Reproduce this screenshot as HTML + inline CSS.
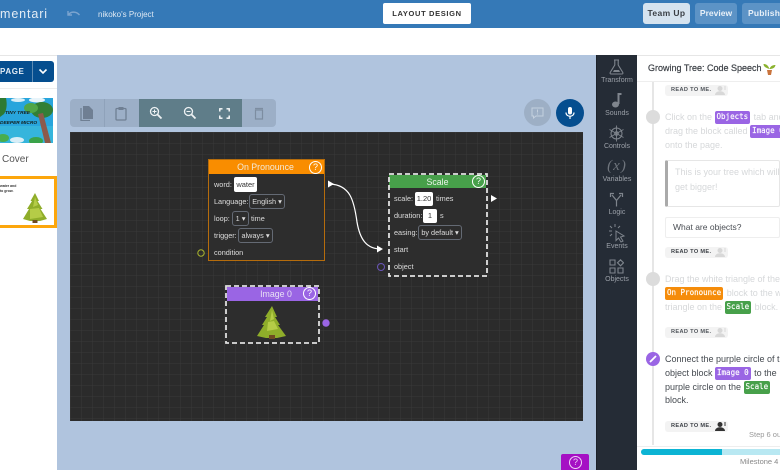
<!DOCTYPE html>
<html><head><meta charset="utf-8">
<style>
*{box-sizing:border-box}
html,body{margin:0;padding:0;width:780px;height:470px;overflow:hidden;background:#fff;font-family:"Liberation Sans",sans-serif}
.a{position:absolute}
.t{position:absolute;white-space:nowrap}
.btn{position:absolute;top:3px;height:21px;border-radius:3px;font:bold 8.5px/21px "Liberation Sans",sans-serif;letter-spacing:.4px;text-align:center;background:#5c93c6;color:#e8f0f8}
.lab{position:absolute;left:597px;width:40px;text-align:center;color:#9ba0a8;font-size:7px;line-height:8px;white-space:nowrap}
.bl{position:absolute;color:#ddd;font-size:7.3px;line-height:9px;white-space:nowrap}
.sel{position:absolute;border:1px solid #646a74;border-radius:3px;color:#ddd;font-size:7.3px;height:15px;line-height:13px;text-align:center;white-space:nowrap}
.inp{position:absolute;background:#fff;border-radius:2px;color:#333;font-size:7.5px;height:14px;line-height:14px;text-align:center}
.q{position:absolute;width:13px;height:13px;border:1.5px solid #fff;border-radius:50%;color:#fff;font-size:9px;line-height:10px;text-align:center}
.hd{position:absolute;font-size:8.8px;line-height:15px;text-align:center;white-space:nowrap}
.txt{position:absolute;font-size:9px;white-space:nowrap;color:#d6d8da}
.dark{color:#454a50}
.tag{display:inline-block;font:7.5px/12px "DejaVu Sans Mono","Liberation Mono",monospace;-webkit-text-stroke:.15px #fff;color:#fff;border-radius:2px;padding:0 2px;height:13px;margin:0 1px 0 0;vertical-align:1px}
.pu{background:#9a65e4}.or{background:#f58c0a}.gr{background:#47a04a}
.read{position:absolute;left:665px;width:63px;height:11px;background:#f3f3f3;border-radius:3px;color:#3c4046;font:bold 5.6px/11px "Liberation Sans",sans-serif;letter-spacing:.35px;padding-left:6px}
.dot{position:absolute;left:646px;width:14px;height:14px;border-radius:50%;background:#dcdcdc}
</style></head><body>

<!-- top bar -->
<div class="a" style="left:0;top:0;width:780px;height:28px;background:#3579b7"></div>
<div class="t" style="left:0;top:5px;color:#e3ecf5;font-size:12.500px;letter-spacing:.9px;line-height:18px">mentari</div>
<svg class="a" style="left:67px;top:9px" width="14" height="9" viewBox="0 0 14 9"><path d="M1 2v4h4M1.500 5.500C4 2.500 9 2 12.500 6" fill="none" stroke="#7ba4cf" stroke-width="1.400"/></svg>
<div class="t" style="left:98px;top:9px;color:#dfe9f3;font-size:8px;line-height:11px">nikoko's Project</div>
<div class="a" style="left:383px;top:3px;width:88px;height:21px;background:#fff;border-radius:2px;color:#333;font:bold 7.500px/21px 'Liberation Sans',sans-serif;letter-spacing:.65px;text-align:center">LAYOUT DESIGN</div>
<div class="btn" style="left:643px;width:47px;background:#d5e3ef;color:#3a3f45">Team Up</div>
<div class="btn" style="left:695px;width:42px;letter-spacing:0">Preview</div>
<div class="btn" style="left:742px;width:50px;text-align:left;padding-left:6px;letter-spacing:.2px">Publish</div>

<!-- white band line -->
<div class="a" style="left:0;top:55px;width:780px;height:1px;background:#e6e6e6"></div>

<!-- left panel -->
<div class="a" style="left:0;top:61px;width:54px;height:21px;background:#054e8f;border-radius:0 3px 3px 0"></div>
<div class="a" style="left:32px;top:61px;width:1px;height:21px;background:#5c8ab3"></div>
<div class="t" style="left:0;top:61px;color:#e4edf5;font:bold 8px/21px 'Liberation Sans',sans-serif;letter-spacing:.6px">PAGE</div>
<svg class="a" style="left:38px;top:68px" width="10" height="7" viewBox="0 0 10 7"><path d="M1.500 1.500L5 5l3.500-3.500" fill="none" stroke="#fff" stroke-width="1.600"/></svg>
<div class="a" style="left:0;top:88px;width:57px;height:1px;background:#eee"></div>

<svg class="a" style="left:0;top:98px" width="53" height="45" viewBox="0 0 53 45">
<rect width="53" height="45" fill="#28a5dc"/>
<rect y="28" width="53" height="17" fill="#35b5dc"/>
<ellipse cx="37" cy="2" rx="8" ry="2.500" fill="#e8f4fa"/>
<ellipse cx="18" cy="2" rx="7" ry="2" fill="#d8eef7"/>
<ellipse cx="36" cy="43" rx="7" ry="4" fill="#3aa34a"/>
<ellipse cx="17" cy="42" rx="7" ry="3" fill="#d8eef7"/>
<path d="M0 0h6q2 10-2 16l-4 3z" fill="#2e7a32"/>
<ellipse cx="42" cy="12" rx="11" ry="8" fill="#327f36"/>
<ellipse cx="31" cy="10" rx="7" ry="5" fill="#4fa648"/>
<path d="M38 16l5-1 8 30h-6z" fill="#8c5a4a"/>
<ellipse cx="3" cy="40" rx="6" ry="4" fill="#48ad4c"/>
<text x="5" y="16" font-size="4.800" font-weight="bold" font-style="italic" fill="#15201c" font-family="Liberation Sans">TINY TREE</text>
<text x="0" y="26" font-size="4.800" font-weight="bold" font-style="italic" fill="#15201c" font-family="Liberation Sans">DEEPER MICRO</text>
</svg>
<div class="t" style="left:2px;top:153px;color:#555;font-size:10px;line-height:13px">Cover</div>
<div class="a" style="left:0;top:176px;width:57px;height:52px;background:#fff;border:3px solid #fca60c;border-left:0"></div>
<div class="t" style="left:0;top:184px;color:#333;font-size:3.500px;line-height:5px;font-weight:bold">water and<br>to grow.</div>
<svg class="a" style="left:22px;top:192px" width="26" height="33" viewBox="0 0 26 33"><path d="M13 1l4 8-1.500 0 5 8-2 0 6.500 10-7 2H8l-7-2 6-10-2 0 5-8-1.500 0z" fill="#8fad2a"/><path d="M13 5l3 8-5 2zM8 17l9-1 4 9-13 2z" fill="#b5cc47"/><rect x="10.500" y="28" width="5" height="3" fill="#6e4a22"/></svg>

<!-- canvas bg -->
<div class="a" style="left:57px;top:55px;width:539px;height:415px;background:#b0c4de"></div>

<!-- toolbar -->
<div class="a" style="left:70px;top:99px;width:206px;height:28px;background:#9cafc7;border-radius:4px"></div>
<div class="a" style="left:104px;top:99px;width:1px;height:28px;background:#8fa2ba"></div>
<div class="a" style="left:139px;top:99px;width:103px;height:28px;background:#5f7d89"></div>
<svg class="a" style="left:80px;top:106px" width="14" height="15" viewBox="0 0 14 15"><path d="M3 0h6l4 4v9H3z" fill="#6f7f93"/><path d="M1 2v12.500h9" fill="none" stroke="#6f7f93" stroke-width="1.300"/></svg>
<svg class="a" style="left:115px;top:106px" width="12" height="15" viewBox="0 0 12 15"><rect x="1" y="2.500" width="10" height="11.500" rx="1" fill="none" stroke="#6f7f93" stroke-width="1.300"/><rect x="3.500" y="1" width="5" height="3" fill="#6f7f93"/></svg>
<svg class="a" style="left:149px;top:106px" width="14" height="14" viewBox="0 0 14 14"><circle cx="5.500" cy="5.500" r="4" fill="none" stroke="#eef2f4" stroke-width="1.300"/><path d="M8.500 8.500l4 4" stroke="#eef2f4" stroke-width="1.800"/><path d="M3.500 5.500h4M5.500 3.500v4" stroke="#eef2f4" stroke-width="1"/></svg>
<svg class="a" style="left:183px;top:106px" width="14" height="14" viewBox="0 0 14 14"><circle cx="5.500" cy="5.500" r="4" fill="none" stroke="#eef2f4" stroke-width="1.300"/><path d="M8.500 8.500l4 4" stroke="#eef2f4" stroke-width="1.800"/><path d="M3.500 5.500h4" stroke="#eef2f4" stroke-width="1"/></svg>
<svg class="a" style="left:219px;top:108px" width="11" height="11" viewBox="0 0 11 11"><path d="M.800 3.500V.800h2.700M7.500.800h2.700v2.700M10.200 7.500v2.700H7.500M3.500 10.200H.800V7.500" fill="none" stroke="#fff" stroke-width="1.400"/></svg>
<svg class="a" style="left:254px;top:107px" width="10" height="13" viewBox="0 0 10 13"><path d="M1 1.500h8M1.500 3h7v9h-7z" fill="none" stroke="#7d8da1" stroke-width="1.200"/></svg>

<!-- round buttons -->
<div class="a" style="left:524px;top:99px;width:27px;height:27px;border-radius:50%;background:#9dafc5"></div>
<svg class="a" style="left:531px;top:107px" width="13" height="12" viewBox="0 0 13 12"><path d="M1 1h11v8H5l-2.500 2V9H1z" fill="none" stroke="#c4d0de" stroke-width="1"/><path d="M6.500 2.500v3M6.500 6.500v1" stroke="#c4d0de" stroke-width="1"/></svg>
<div class="a" style="left:556px;top:99px;width:28px;height:28px;border-radius:50%;background:#054e8f"></div>
<svg class="a" style="left:564px;top:106px" width="12" height="14" viewBox="0 0 12 14"><rect x="4" y="1" width="4" height="7.500" rx="2" fill="#fff"/><path d="M2 6.500c0 5 8 5 8 0M6 10.500V13" fill="none" stroke="#fff" stroke-width="1.200"/></svg>

<!-- canvas -->
<svg class="a" style="left:70px;top:132px" width="513" height="289" viewBox="0 0 513 289">
<defs><pattern id="g" width="11" height="11" patternUnits="userSpaceOnUse"><path d="M11 0H0V11" fill="none" stroke="#3a3a3a" stroke-width="1"/></pattern></defs>
<rect width="513" height="289" fill="#2b2b2b"/><rect width="513" height="289" fill="url(#g)"/>
<path d="M260 52c20 1 24 16 27 38 3 18 10 27 24 27" fill="none" stroke="#fff" stroke-width="1.200"/>
<path d="M258 48.500v7l6-3.500zM307 113.500v7l6-3.500z" fill="#fff"/>
<path d="M421 63v7l6-3.500z" fill="#fff"/>
<circle cx="131" cy="121" r="3.200" fill="none" stroke="#a9b52c" stroke-width="1"/>
<circle cx="311" cy="135" r="3.500" fill="none" stroke="#6a55b8" stroke-width="1"/>
<circle cx="256" cy="191" r="3.700" fill="#9a65e4"/>
</svg>

<!-- On Pronounce -->
<div class="a" style="left:208px;top:159px;width:117px;height:102px;background:#2d2d2d;border:1px solid #b56c0c"></div>
<div class="hd" style="left:209px;top:160px;height:14px;color:#f4ead8;background:#f98d00;width:115px;padding-right:2px">On Pronounce</div>
<div class="q" style="left:309px;top:161px">?</div>
<div class="bl" style="left:214px;top:180px">word:</div>
<div class="inp" style="left:234px;top:177px;width:23px;height:15px;line-height:15px">water</div>
<div class="bl" style="left:214px;top:197px">Language:</div>
<div class="sel" style="left:249px;top:194px;width:36px">English ▾</div>
<div class="bl" style="left:214px;top:214px">loop:</div>
<div class="sel" style="left:232px;top:211px;width:17px">1 ▾</div>
<div class="bl" style="left:251px;top:214px">time</div>
<div class="bl" style="left:214px;top:231px">trigger:</div>
<div class="sel" style="left:238px;top:228px;width:35px">always ▾</div>
<div class="bl" style="left:214px;top:248px">condition</div>

<!-- Scale -->
<div class="a" style="left:388px;top:174px;width:99px;height:102px;background:#2d2d2d"></div>
<div class="hd" style="left:389px;top:175px;width:97px;height:13px;background:#47a04a;color:#e9f3e9">Scale</div>
<svg class="a" style="left:387px;top:172px" width="102" height="106" viewBox="0 0 102 106"><rect x="2" y="2" width="98" height="102" fill="none" stroke="#e2e2e2" stroke-width="1.800" stroke-dasharray="5 3"/></svg>
<div class="q" style="left:472px;top:175px">?</div>
<div class="bl" style="left:394px;top:194px">scale:</div>
<div class="inp" style="left:415px;top:192px;width:18px">1.20</div>
<div class="bl" style="left:436px;top:194px">times</div>
<div class="bl" style="left:394px;top:211px">duration:</div>
<div class="inp" style="left:423px;top:209px;width:14px">1</div>
<div class="bl" style="left:440px;top:211px">s</div>
<div class="bl" style="left:394px;top:228px">easing:</div>
<div class="sel" style="left:418px;top:225px;width:44px">by default ▾</div>
<div class="bl" style="left:394px;top:245px">start</div>
<div class="bl" style="left:394px;top:262px">object</div>

<!-- Image 0 -->
<div class="a" style="left:226px;top:286px;width:93px;height:57px;background:#2d2d2d"></div>
<div class="hd" style="left:227px;top:287px;width:91px;height:14px;background:#9a65e4;color:#e8e0f4;padding-left:7px">Image 0</div>
<svg class="a" style="left:224px;top:284px" width="97" height="61" viewBox="0 0 97 61"><rect x="2" y="2" width="93" height="57" fill="none" stroke="#dedede" stroke-width="1.800" stroke-dasharray="5 3"/></svg>
<div class="q" style="left:303px;top:287px">?</div>
<svg class="a" style="left:256px;top:305px" width="32" height="35" viewBox="0 0 32 35"><path d="M16 1l5 11h-2l5 8h-2l8 11-9 2H10l-9-2 7-11H6l5-8H9z" fill="#8fad2a"/><path d="M16 5l2 9-4 2zM12 17l6-1 4 8-11 2z" fill="#b5cc47"/><rect x="13" y="30" width="6" height="4" fill="#6e4a22"/></svg>

<!-- help -->
<div class="a" style="left:561px;top:454px;width:28px;height:16px;background:#a510c4;border-radius:2px 2px 0 0"></div>
<div class="q" style="left:569px;top:456px;border-color:#f0d4f6;color:#f0d4f6">?</div>

<!-- tool rail -->
<div class="a" style="left:597px;top:55px;width:40px;height:415px;background:#252c36"></div>
<div class="a" style="left:596px;top:55px;width:1px;height:415px;background:#1c2129"></div>
<svg class="a" style="left:609px;top:59px" width="15" height="16" viewBox="0 0 15 16"><path d="M5 1h5M5.800 1v5L1.200 13.500q-.5 1.500 1 1.500h10.600q1.500 0 1-1.500L9.200 6V1" fill="none" stroke="#7f858d" stroke-width="1.100"/><path d="M5 11h5l1 2H4z" fill="#7f858d"/></svg>
<div class="lab" style="top:77px">Transform</div>
<svg class="a" style="left:611px;top:92px" width="12" height="16" viewBox="0 0 12 16"><ellipse cx="4.500" cy="12.500" rx="3.500" ry="3" fill="#7f858d"/><rect x="6.500" y="1" width="2" height="11" fill="#7f858d"/><rect x="6.500" y="1" width="4" height="2" fill="#7f858d"/></svg>
<div class="lab" style="top:110px">Sounds</div>
<svg class="a" style="left:608px;top:125px" width="17" height="17" viewBox="0 0 17 17"><circle cx="8.500" cy="8.500" r="5.500" fill="none" stroke="#7f858d" stroke-width="1"/><circle cx="8.500" cy="8.500" r="1.800" fill="none" stroke="#7f858d"/><path d="M8.500 .5v16M1.500 4.500l14 8M15.500 4.500l-14 8" fill="none" stroke="#7f858d" stroke-width=".9"/></svg>
<div class="lab" style="top:143px">Controls</div>
<div class="t" style="left:597px;width:40px;top:158px;text-align:center;color:#6f757d;font:italic 15px/17px 'Liberation Serif',serif;letter-spacing:1px">(x)</div>
<div class="lab" style="top:176px">Variables</div>
<svg class="a" style="left:609px;top:192px" width="15" height="15" viewBox="0 0 15 15"><path d="M7.500 14.500V8.500L3 3M7.500 8.500L12 3M1.500 5V1.500H5M13.500 5V1.500H10" fill="none" stroke="#7f858d" stroke-width="1.200"/></svg>
<div class="lab" style="top:209px">Logic</div>
<svg class="a" style="left:608px;top:223px" width="18" height="20" viewBox="0 0 18 20"><path d="M8 8l8 5-3.500 1 2.500 4-2 1-2.500-4-2.500 2.500z" fill="none" stroke="#7f858d"/><path d="M7 1v3M2 3l2 2M1 8h3M2 13l2-2M12 3l-2 2" stroke="#7f858d"/></svg>
<div class="lab" style="top:243px">Events</div>
<svg class="a" style="left:609px;top:259px" width="15" height="15" viewBox="0 0 15 15"><path d="M1 1h5v5H1zM1 9h5v5H1zM9 9h5v5H9zM11.500 .8l3 3-3 3-3-3z" fill="none" stroke="#7f858d" stroke-width="1.100"/></svg>
<div class="lab" style="top:276px">Objects</div>

<!-- right panel -->
<div class="t" style="left:648px;top:62px;color:#3c4046;font-size:9px;line-height:13px;-webkit-text-stroke:.2px #3c4046">Growing Tree: Code Speech</div>
<svg class="a" style="left:763px;top:62px" width="13" height="13" viewBox="0 0 13 13"><path d="M6.500 7C5 3 3 2 .500 2c0 3 3 4 6 5zM6.500 7c1-3 3-4 6-4-.500 3-3 4-6 4z" fill="#8bb22e"/><path d="M4 8h5l-1 5H5z" fill="#c9743d"/></svg>
<div class="a" style="left:637px;top:81px;width:143px;height:1px;background:#eee"></div>
<div class="a" style="left:652px;top:82px;width:2px;height:363px;background:#e6e6e6"></div>

<div class="read" style="top:85px;color:#50555b">READ TO ME.</div>
<svg class="a" style="left:715px;top:85px" width="12" height="11" viewBox="0 0 12 11"><circle cx="5" cy="3.500" r="2.500" fill="#d8d8d8"/><path d="M0 10c0-5 10-5 10 0z" fill="#d8d8d8"/><path d="M10 1v4" stroke="#d8d8d8"/></svg>
<div class="dot" style="top:110px"></div>
<div class="txt" style="left:665px;top:110px;line-height:14px">Click on the <span class="tag pu">Objects</span> tab and</div>
<div class="txt" style="left:665px;top:124px;line-height:14px">drag the block called <span class="tag pu">Image 0</span></div>
<div class="txt" style="left:665px;top:138px;line-height:14px">onto the page.</div>

<div class="a" style="left:665px;top:160px;width:115px;height:47px;border:1px solid #e6e6e6;border-left:3px solid #aaa;border-radius:2px"></div>
<div class="txt" style="left:675px;top:165px;line-height:15px">This is your tree which will<br>get bigger!</div>
<div class="a" style="left:665px;top:217px;width:115px;height:21px;border:1px solid #eee;border-radius:2px;color:#4a4e54;font-size:8.500px;line-height:19px;padding-left:7px">What are objects?</div>
<div class="read" style="top:247px">READ TO ME.</div>
<svg class="a" style="left:715px;top:247px" width="12" height="11" viewBox="0 0 12 11"><circle cx="5" cy="3.500" r="2.500" fill="#d8d8d8"/><path d="M0 10c0-5 10-5 10 0z" fill="#d8d8d8"/><path d="M10 1v4" stroke="#d8d8d8"/></svg>

<div class="dot" style="top:272px"></div>
<div class="txt" style="left:665px;top:272px;line-height:14px">Drag the white triangle of the</div>
<div class="txt" style="left:665px;top:286px;line-height:14px"><span class="tag or">On Pronounce</span> block to the w</div>
<div class="txt" style="left:665px;top:300px;line-height:14px">triangle on the <span class="tag gr">Scale</span> block.</div>
<div class="read" style="top:327px;color:#50555b">READ TO ME.</div>
<svg class="a" style="left:715px;top:327px" width="12" height="11" viewBox="0 0 12 11"><circle cx="5" cy="3.500" r="2.500" fill="#d8d8d8"/><path d="M0 10c0-5 10-5 10 0z" fill="#d8d8d8"/><path d="M10 1v4" stroke="#d8d8d8"/></svg>

<div class="a" style="left:646px;top:352px;width:14px;height:14px;border-radius:50%;background:#9a65e4"></div>
<svg class="a" style="left:649px;top:355px" width="8" height="8" viewBox="0 0 8 8"><path d="M1 7l6-6" stroke="#fff" stroke-width="1.800"/></svg>
<div class="txt dark" style="left:665px;top:352px;line-height:14px">Connect the purple circle of t</div>
<div class="txt dark" style="left:665px;top:366px;line-height:14px">object block <span class="tag pu">Image 0</span> to the</div>
<div class="txt dark" style="left:665px;top:380px;line-height:14px">purple circle on the <span class="tag gr">Scale</span></div>
<div class="txt dark" style="left:665px;top:393px;line-height:14px">block.</div>
<div class="read" style="top:421px">READ TO ME.</div>
<svg class="a" style="left:715px;top:421px" width="12" height="11" viewBox="0 0 12 11"><circle cx="5" cy="3.500" r="2.500" fill="#333"/><path d="M0 10c0-5 10-5 10 0z" fill="#333"/><path d="M10 1v4" stroke="#333"/></svg>
<div class="t" style="left:749px;top:430px;color:#999;font-size:7.500px;line-height:10px">Step 6 out</div>
<div class="a" style="left:637px;top:446px;width:143px;height:1px;background:#eee"></div>
<div class="a" style="left:641px;top:449px;width:139px;height:6px;background:#b8e8f2;border-radius:3px 0 0 3px"></div>
<div class="a" style="left:641px;top:449px;width:81px;height:6px;background:#0cb4d4;border-radius:3px 0 0 3px"></div>
<div class="t" style="left:740px;top:457px;color:#888;font-size:7.500px;line-height:10px">Milestone 4 c</div>
</body></html>
